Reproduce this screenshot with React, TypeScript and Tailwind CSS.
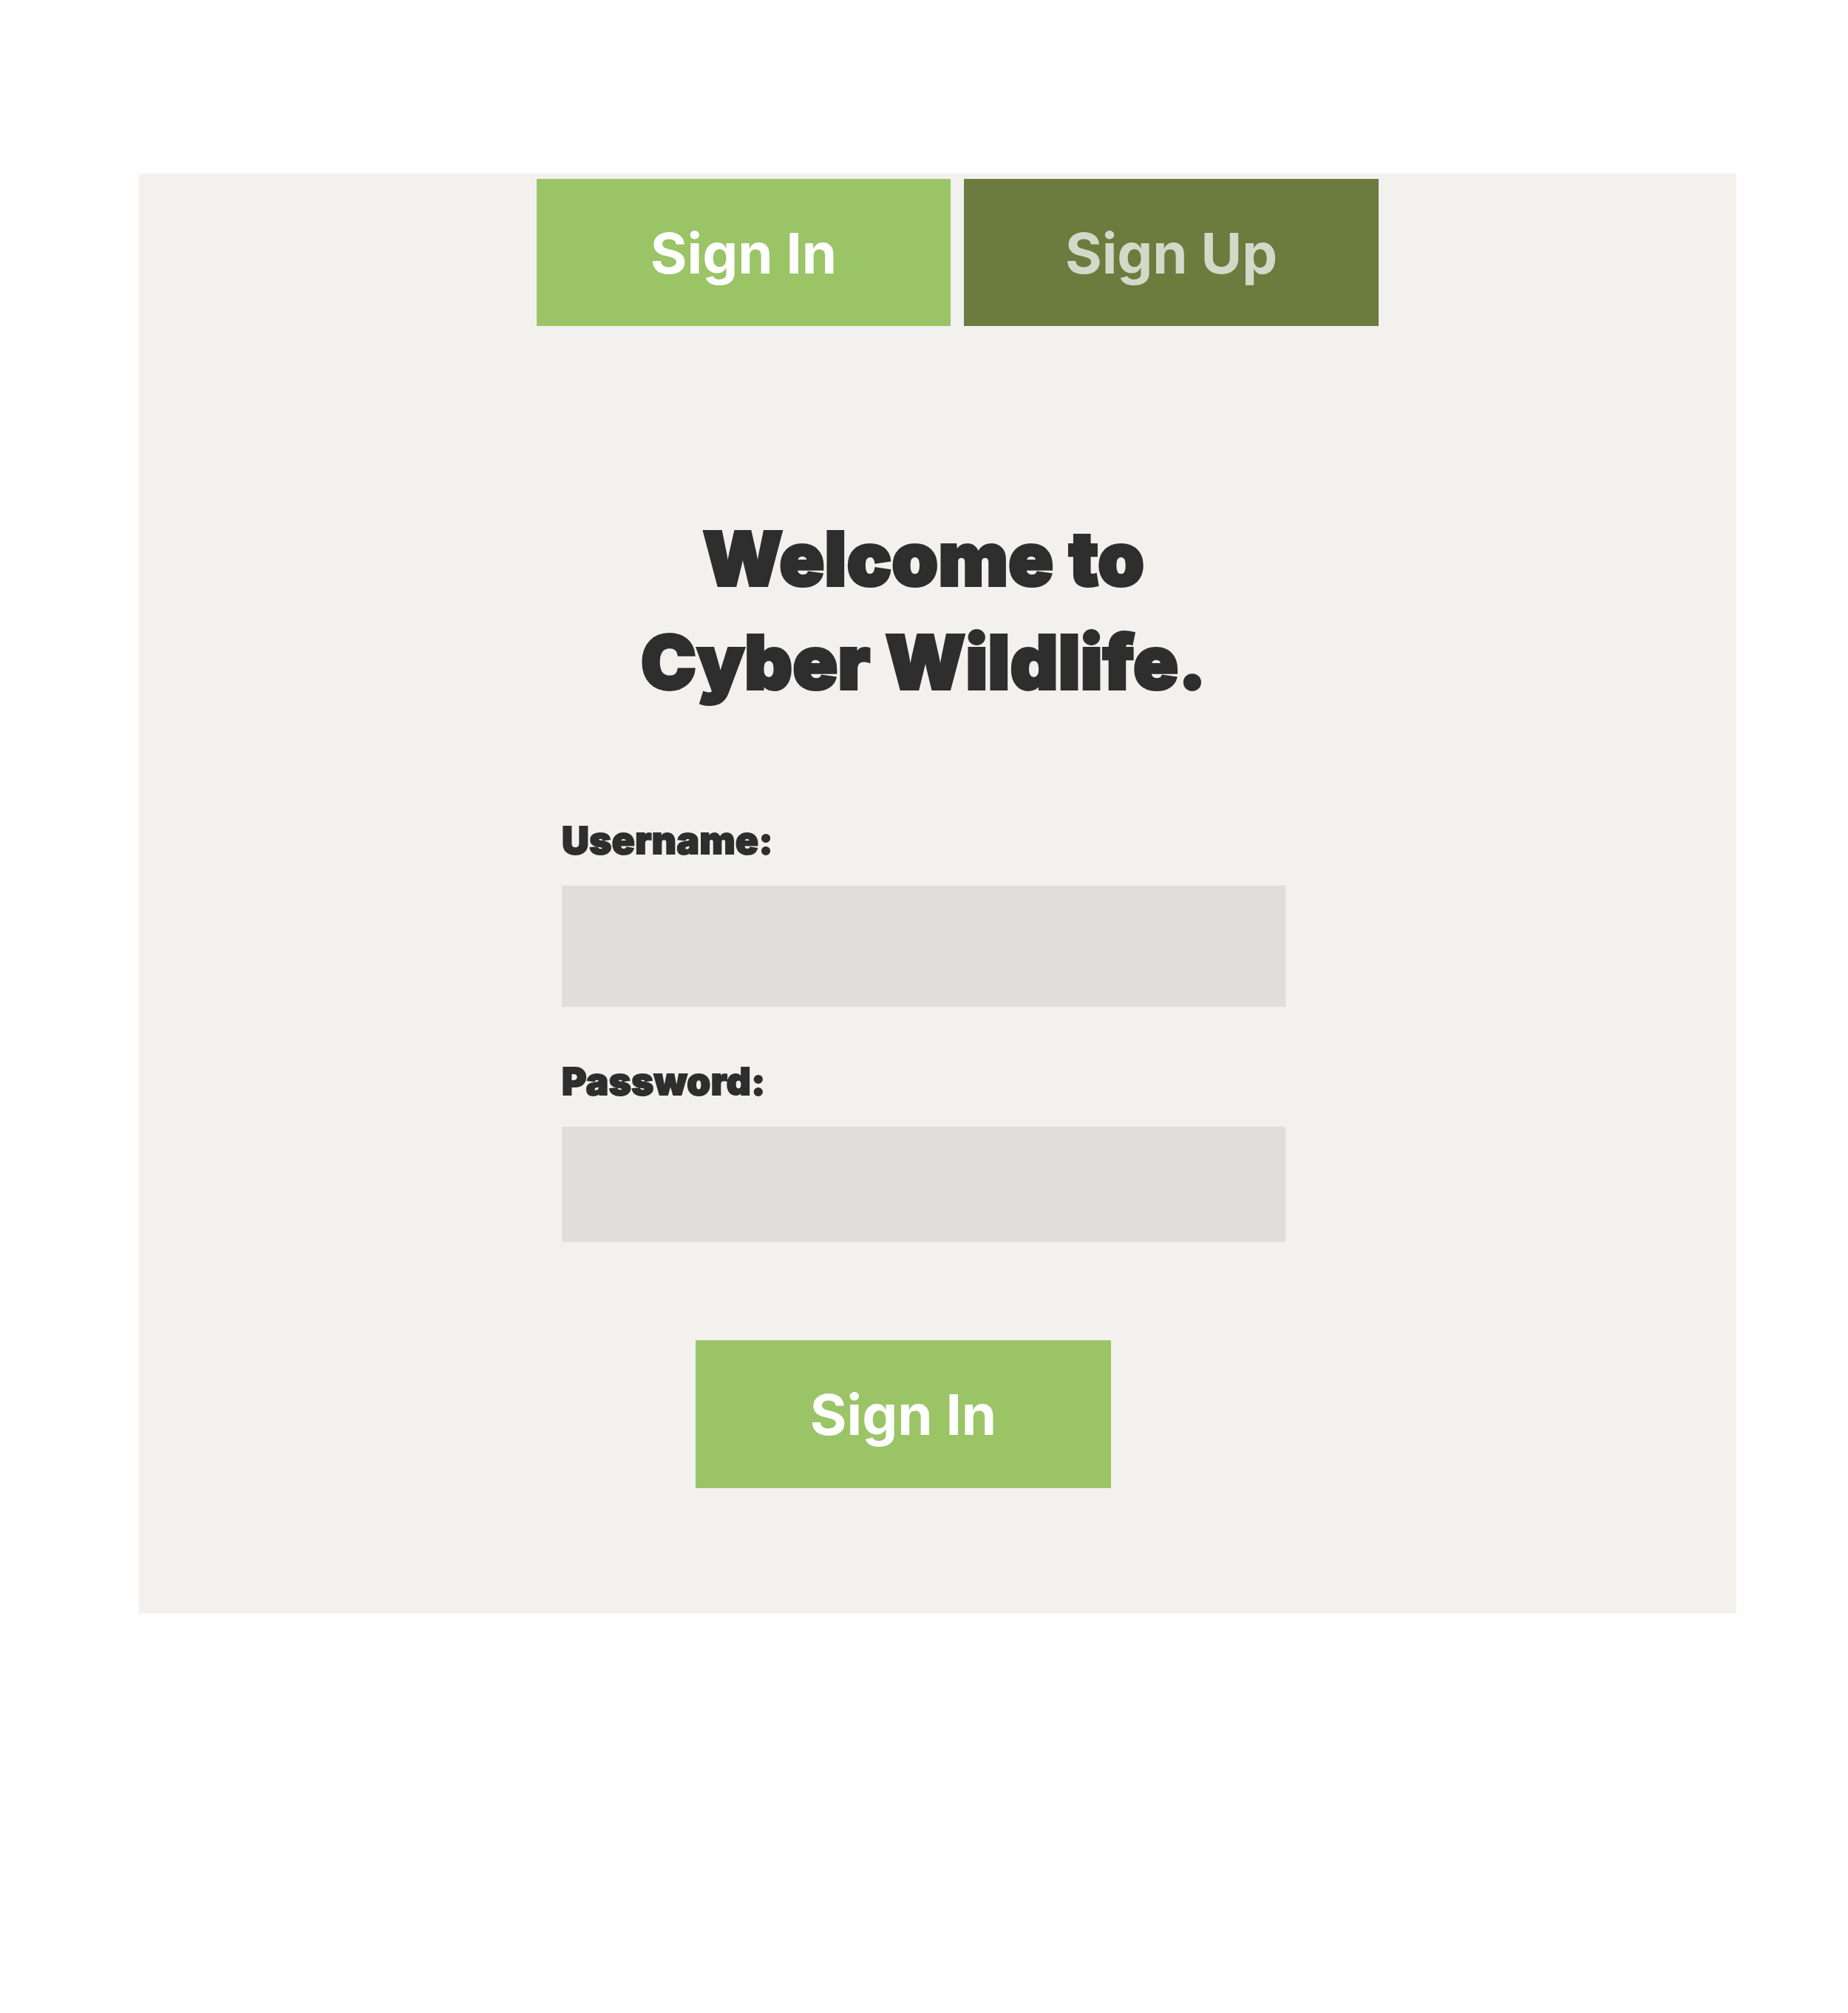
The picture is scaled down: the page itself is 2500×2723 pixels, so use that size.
import React from "react";

const App: React.FC = () => {
  return (
    <div className="min-h-screen w-[2500px] h-[2723px] bg-[#fefefe] pt-[235px] font-['Inter','Liberation_Sans',sans-serif]">
      {/* Panel */}
      <div className="ml-[188px] w-[2161px] h-[1947px] bg-[#f2f1ed] pt-[7px]">
        {/* Tabs */}
        <div className="flex gap-[18px] pl-[538px]">
          <button className="w-[560px] h-[199px] bg-[#9bc467] text-white text-[76px] font-bold leading-none">
            Sign In
          </button>
          <button className="w-[561px] h-[199px] bg-[#6b7c3e] text-[#d3d9c8] text-[76px] font-bold leading-none">
            Sign Up
          </button>
        </div>

        {/* Form */}
        <div className="ml-[572px] w-[979px] pt-[245px]">
          <h1 className="text-center text-[100px] leading-[140px] font-black text-[#2e2e2e] tracking-[0.5px] [-webkit-text-stroke:4px_#2e2e2e]">
            Welcome to
            <br />
            Cyber Wildlife.
          </h1>

          <div className="mt-[145px]">
            <label className="block text-[51px] leading-none font-black text-[#2e2e2e] tracking-[0.5px] [-webkit-text-stroke:2px_#2e2e2e]">
              Username:
            </label>
            <input type="text" className="block mt-[36px] w-full h-[164px] bg-[#dfdedc] outline-none" />
          </div>

          <div className="mt-[75px]">
            <label className="block text-[51px] leading-none font-black text-[#2e2e2e] tracking-[0.5px] [-webkit-text-stroke:2px_#2e2e2e]">
              Password:
            </label>
            <input type="password" className="block mt-[36px] w-full h-[156px] bg-[#dfdedc] outline-none" />
          </div>

          <button className="block mt-[133px] ml-[181px] w-[562px] h-[200px] bg-[#9bc467] text-white text-[76px] font-bold leading-none">
            Sign In
          </button>
        </div>
      </div>
    </div>
  );
};

export default App;
